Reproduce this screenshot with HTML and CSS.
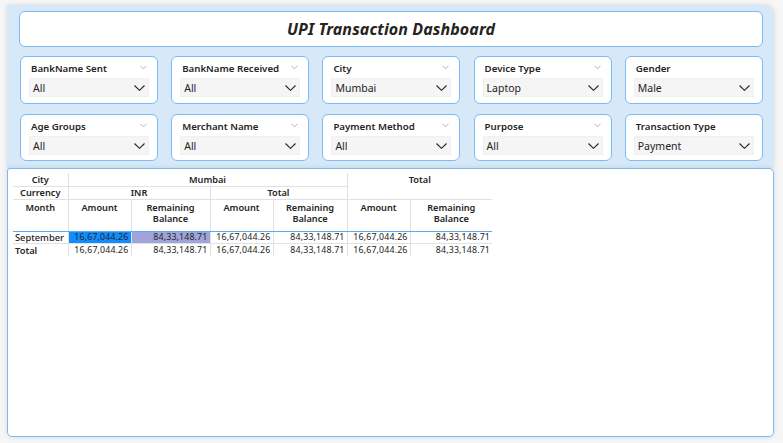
FILE: index.html
```html
<!DOCTYPE html>
<html lang="en">
<head>
<meta charset="utf-8">
<title>UPI Transaction Dashboard</title>
<link rel="stylesheet" href="styles.css">
</head>
<body>
<div class="page">
  <section class="filters-panel">
    <header class="title-box"><h1 class="title">UPI Transaction Dashboard</h1></header>
    <div class="slicer-grid">
      <div class="slicer"><div class="slicer-head"><span class="slicer-label">BankName Sent</span><svg class="mini-chev" viewBox="0 0 8 5"><polyline points="0.5,0.5 4,4 7.5,0.5"/></svg></div><div class="dropdown"><span>All</span><svg class="chev" viewBox="0 0 11 6"><polyline points="0.5,0.5 5.5,5.3 10.5,0.5"/></svg></div></div>
      <div class="slicer"><div class="slicer-head"><span class="slicer-label">BankName Received</span><svg class="mini-chev" viewBox="0 0 8 5"><polyline points="0.5,0.5 4,4 7.5,0.5"/></svg></div><div class="dropdown"><span>All</span><svg class="chev" viewBox="0 0 11 6"><polyline points="0.5,0.5 5.5,5.3 10.5,0.5"/></svg></div></div>
      <div class="slicer"><div class="slicer-head"><span class="slicer-label">City</span><svg class="mini-chev" viewBox="0 0 8 5"><polyline points="0.5,0.5 4,4 7.5,0.5"/></svg></div><div class="dropdown"><span>Mumbai</span><svg class="chev" viewBox="0 0 11 6"><polyline points="0.5,0.5 5.5,5.3 10.5,0.5"/></svg></div></div>
      <div class="slicer"><div class="slicer-head"><span class="slicer-label">Device Type</span><svg class="mini-chev" viewBox="0 0 8 5"><polyline points="0.5,0.5 4,4 7.5,0.5"/></svg></div><div class="dropdown"><span>Laptop</span><svg class="chev" viewBox="0 0 11 6"><polyline points="0.5,0.5 5.5,5.3 10.5,0.5"/></svg></div></div>
      <div class="slicer"><div class="slicer-head"><span class="slicer-label">Gender</span></div><div class="dropdown"><span>Male</span><svg class="chev" viewBox="0 0 11 6"><polyline points="0.5,0.5 5.5,5.3 10.5,0.5"/></svg></div></div>
      <div class="slicer"><div class="slicer-head"><span class="slicer-label">Age Groups</span><svg class="mini-chev" viewBox="0 0 8 5"><polyline points="0.5,0.5 4,4 7.5,0.5"/></svg></div><div class="dropdown"><span>All</span><svg class="chev" viewBox="0 0 11 6"><polyline points="0.5,0.5 5.5,5.3 10.5,0.5"/></svg></div></div>
      <div class="slicer"><div class="slicer-head"><span class="slicer-label">Merchant Name</span><svg class="mini-chev" viewBox="0 0 8 5"><polyline points="0.5,0.5 4,4 7.5,0.5"/></svg></div><div class="dropdown"><span>All</span><svg class="chev" viewBox="0 0 11 6"><polyline points="0.5,0.5 5.5,5.3 10.5,0.5"/></svg></div></div>
      <div class="slicer"><div class="slicer-head"><span class="slicer-label">Payment Method</span><svg class="mini-chev" viewBox="0 0 8 5"><polyline points="0.5,0.5 4,4 7.5,0.5"/></svg></div><div class="dropdown"><span>All</span><svg class="chev" viewBox="0 0 11 6"><polyline points="0.5,0.5 5.5,5.3 10.5,0.5"/></svg></div></div>
      <div class="slicer"><div class="slicer-head"><span class="slicer-label">Purpose</span><svg class="mini-chev" viewBox="0 0 8 5"><polyline points="0.5,0.5 4,4 7.5,0.5"/></svg></div><div class="dropdown"><span>All</span><svg class="chev" viewBox="0 0 11 6"><polyline points="0.5,0.5 5.5,5.3 10.5,0.5"/></svg></div></div>
      <div class="slicer"><div class="slicer-head"><span class="slicer-label">Transaction Type</span></div><div class="dropdown"><span>Payment</span><svg class="chev" viewBox="0 0 11 6"><polyline points="0.5,0.5 5.5,5.3 10.5,0.5"/></svg></div></div>
    </div>
  </section>
  <section class="table-panel">
    <table class="matrix">
      <colgroup>
        <col class="c-rowhead"><col class="c-amt"><col class="c-rem1"><col class="c-amt"><col class="c-rem2"><col class="c-amt"><col class="c-rem3">
      </colgroup>
      <thead>
        <tr class="r-city">
          <th class="rowhead b-bottom">City</th>
          <th colspan="4" class="b-bottom b-right">Mumbai</th>
          <th colspan="2" rowspan="2" class="b-bottom top-total">Total</th>
        </tr>
        <tr class="r-cur">
          <th class="rowhead b-bottom">Currency</th>
          <th colspan="2" class="b-bottom b-right">INR</th>
          <th colspan="2" class="b-bottom b-right">Total</th>
        </tr>
        <tr class="r-month">
          <th class="rowhead">Month</th>
          <th class="b-right">Amount</th>
          <th class="b-right">Remaining<br>Balance</th>
          <th class="b-right">Amount</th>
          <th class="b-right">Remaining<br>Balance</th>
          <th class="b-right">Amount</th>
          <th>Remaining<br>Balance</th>
        </tr>
      </thead>
      <tbody>
        <tr class="r-data">
          <td class="rowhead">September</td>
          <td class="num b-right hl-blue">16,67,044.26</td>
          <td class="num b-right hl-lav">84,33,148.71</td>
          <td class="num b-right">16,67,044.26</td>
          <td class="num b-right">84,33,148.71</td>
          <td class="num b-right">16,67,044.26</td>
          <td class="num">84,33,148.71</td>
        </tr>
        <tr class="r-total">
          <td class="rowhead">Total</td>
          <td class="num b-right">16,67,044.26</td>
          <td class="num b-right">84,33,148.71</td>
          <td class="num b-right">16,67,044.26</td>
          <td class="num b-right">84,33,148.71</td>
          <td class="num b-right">16,67,044.26</td>
          <td class="num">84,33,148.71</td>
        </tr>
      </tbody>
    </table>
  </section>
</div>
</body>
</html>
```
FILE: styles.css
```css
* { box-sizing: border-box; }
html, body { margin: 0; padding: 0; }
body {
  background: #f6f6f6;
  font-family: "Noto Sans", "Open Sans", sans-serif;
  color: #252423;
  width: 783px;
  height: 443px;
  overflow: hidden;
}
.page {
  display: flex;
  flex-direction: column;
  padding: 5px 9px 6px 7px;
  height: 443px;
}
.filters-panel {
  background: #d7e9f8;
  border-top-right-radius: 9px;
  padding: 6px 11px 7px 12px;
  box-shadow: 0 0 5px rgba(0,0,0,0.12);
}
.title-box {
  height: 36px;
  background: #fff;
  border: 1.5px solid #7cbaf6;
  border-radius: 6px;
  display: flex;
  align-items: center;
  justify-content: center;
}
.title {
  margin: 0;
  font-size: 16px;
  font-weight: 700;
  font-style: italic;
  letter-spacing: 0.1px;
  color: #252423;
}
.slicer-grid {
  margin-top: 9px;
  margin-left: 1px;
  display: grid;
  grid-template-columns: repeat(5, 138px);
  column-gap: 13.2px;
  row-gap: 10px;
}
.slicer {
  height: 47.5px;
  background: #fff;
  border: 1.5px solid #7cbaf6;
  border-radius: 6px;
  padding: 4px 8px 0 8px;
}
.slicer-head {
  height: 17px;
  display: flex;
  justify-content: space-between;
  align-items: flex-start;
  padding-left: 2px;
}
.slicer-label {
  font-size: 9.7px;
  font-weight: 600;
  line-height: 16px;
  color: #252423;
}
.mini-chev {
  width: 7px;
  height: 5px;
  margin-top: 4px;
  margin-right: 2px;
  fill: none;
  stroke: #a8a8a8;
  stroke-width: 1;
}
.dropdown {
  height: 19px;
  background: #f5f5f5;
  border: 1px solid #f0f0f0;
  display: flex;
  align-items: center;
  justify-content: space-between;
  padding: 0 3px 0 3px;
}
.dropdown span {
  font-size: 10.5px;
  line-height: 14px;
  margin-top: 1px;
  color: #252423;
}
.chev {
  width: 11px;
  height: 6px;
  margin-top: 1px;
  fill: none;
  stroke: #252423;
  stroke-width: 1.1;
}
.table-panel {
  flex: 1;
  background: #fff;
  border: 1.5px solid #7cbaf6;
  border-radius: 5px;
  border-top-left-radius: 3px;
  padding: 4px 0 0 5px;
  box-shadow: 0 0 5px rgba(0,0,0,0.12);
}
.matrix {
  border-collapse: collapse;
  table-layout: fixed;
  width: 479px;
  font-size: 8.8px;
  color: #252423;
}
.c-rowhead { width: 55px; }
.c-amt { width: 63px; }
.c-rem1 { width: 79px; }
.c-rem2 { width: 74px; }
.c-rem3 { width: 82px; }
.matrix th {
  font-weight: 600;
  font-size: 9.2px;
  padding: 0;
  text-align: center;
  line-height: 11.5px;
  vertical-align: top;
}
.matrix td {
  padding: 0 2px 0 2px;
  line-height: 11px;
  white-space: nowrap;
  letter-spacing: 0.15px;
}
.r-city th { height: 13.5px; padding-top: 1px; }
.r-cur th { height: 12.5px; }
.r-month th {
  height: 32px;
  padding-top: 2px;
  border-bottom: 1px solid #5ea9f2;
}
.matrix th.top-total { padding-top: 1px; }
.b-bottom { border-bottom: 1px solid #e1e1e1; }
.b-right { border-right: 1px solid #e1e1e1; }
.rowhead { border-right: 1px solid #e1e1e1; }
.matrix td.rowhead {
  text-align: left;
  padding-left: 2px;
  font-size: 9.3px;
  font-weight: 500;
  letter-spacing: 0;
}
.r-data td {
  height: 12.5px;
  border-bottom: 1px solid #e1e1e1;
}
.r-total td { height: 12.5px; }
.r-total td.rowhead { font-weight: 600; }
.num { text-align: right; }
.hl-blue { background: #118dff; }
.hl-lav { background: #a1a4da; }
```
